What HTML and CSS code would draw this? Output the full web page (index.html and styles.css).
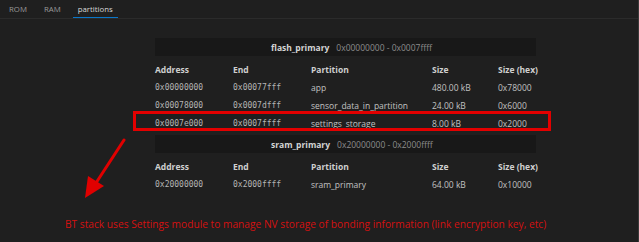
FILE: index.html
```html
<!DOCTYPE html>
<html>
<head>
<meta charset="utf-8">
<link rel="stylesheet" href="styles.css">
</head>
<body>
<div class="frame">
  <div class="tabs">
    <div class="tab">ROM</div>
    <div class="tab">RAM</div>
    <div class="tab active">partitions</div>
  </div>
  <div class="content">
    <section class="region">
      <div class="band"><span class="rname">flash_primary</span><span class="range">0x00000000 - 0x0007ffff</span></div>
      <div class="grid head">
        <span>Address</span><span>End</span><span>Partition</span><span>Size</span><span>Size (hex)</span>
      </div>
      <div class="grid row">
        <span class="mono">0x00000000</span><span class="mono">0x00077fff</span><span>app</span><span>480.00 kB</span><span>0x78000</span>
      </div>
      <div class="grid row">
        <span class="mono">0x00078000</span><span class="mono">0x0007dfff</span><span>sensor_data_in_partition</span><span>24.00 kB</span><span>0x6000</span>
      </div>
      <div class="grid row">
        <span class="mono">0x0007e000</span><span class="mono">0x0007ffff</span><span>settings_storage</span><span>8.00 kB</span><span>0x2000</span>
      </div>
    </section>
    <section class="region second">
      <div class="band"><span class="rname">sram_primary</span><span class="range">0x20000000 - 0x2000ffff</span></div>
      <div class="grid head">
        <span>Address</span><span>End</span><span>Partition</span><span>Size</span><span>Size (hex)</span>
      </div>
      <div class="grid row">
        <span class="mono">0x20000000</span><span class="mono">0x2000ffff</span><span>sram_primary</span><span>64.00 kB</span><span>0x10000</span>
      </div>
    </section>
    <p class="note">BT stack uses Settings module to manage NV storage of bonding information (link encryption key, etc)</p>
  </div>
  <div class="highlight"></div>
  <svg class="arrow" width="60" height="70" viewBox="0 0 60 70">
    <line x1="44" y1="2" x2="14" y2="48" stroke="#e00000" stroke-width="3" stroke-linecap="round"/>
    <polygon points="5,60 8,38 24,48" fill="#e00000"/>
  </svg>
</div>
</body>
</html>
```
FILE: styles.css
```css
html, body {
  margin: 0;
  padding: 0;
  background: #1f1f1f;
}
.frame {
  position: relative;
  width: 639px;
  height: 242px;
  box-sizing: border-box;
  background: #1f1f1f;
  border-right: 1px solid #3a3a3a;
  font-family: "Open Sans", "Noto Sans", sans-serif;
  overflow: hidden;
}
.tabs {
  display: flex;
  gap: 7px;
  height: 18px;
  border-bottom: 1px solid #2b2b2b;
  padding-left: 4px;
  background: #1f1f1f;
}
.tab {
  font-size: 7.8px;
  color: #9a9a9a;
  padding: 0 5px;
  line-height: 18px;
  box-sizing: border-box;
  height: 18px;
}
.tab.active {
  color: #d8d8d8;
  border-bottom: 1px solid #0a76c8;
}
.content {
  padding-top: 19px;
}
.region {
  margin-left: 155px;
  width: 381px;
}
.region.second {
  margin-top: 3px;
}
.band {
  height: 18px;
  background: #181818;
  display: flex;
  align-items: center;
  padding-left: 116px;
  gap: 7px;
}
.rname {
  font-size: 8.5px;
  font-weight: 700;
  color: #d4d4d4;
}
.range {
  font-size: 8.5px;
  color: #8c8c8c;
}
.grid {
  display: grid;
  grid-template-columns: 78px 78px 121px 66px 38px;
  height: 18px;
  align-items: center;
  font-size: 8.5px;
  color: #c2c2c2;
}
.grid.head {
  margin-top: 4px;
  font-weight: 700;
  color: #cfcfcf;
}
.grid span {
  white-space: nowrap;
}
.mono {
  font-family: "DejaVu Sans Mono", monospace;
  font-size: 8px;
  color: #b4b4b4;
}
.note {
  margin: 24px 0 0 65px;
  font-size: 10.2px;
  color: #d41111;
  white-space: nowrap;
}
.highlight {
  position: absolute;
  left: 133px;
  top: 111px;
  width: 418px;
  height: 20px;
  box-sizing: border-box;
  border: 3px solid #e30000;
}
.arrow {
  position: absolute;
  left: 80px;
  top: 138px;
}
```
